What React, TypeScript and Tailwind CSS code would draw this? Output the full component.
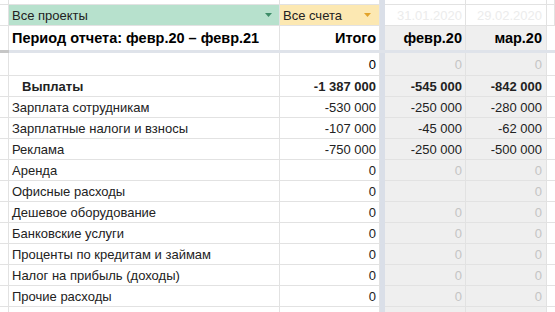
import React from "react";

const G = "border-[#e2e2e2]";

type Row = { label: string; bold?: boolean; indent?: boolean; total: string; e: string; f: string; eDark?: boolean };

const rows: Row[] = [
  { label: "Выплаты", bold: true, indent: true, total: "-1 387 000", e: "-545 000", f: "-842 000", eDark: true },
  { label: "Зарплата сотрудникам", total: "-530 000", e: "-250 000", f: "-280 000", eDark: true },
  { label: "Зарплатные налоги и взносы", total: "-107 000", e: "-45 000", f: "-62 000", eDark: true },
  { label: "Реклама", total: "-750 000", e: "-250 000", f: "-500 000", eDark: true },
  { label: "Аренда", total: "0", e: "0", f: "0" },
  { label: "Офисные расходы", total: "0", e: "", f: "0" },
  { label: "Дешевое оборудование", total: "0", e: "0", f: "0" },
  { label: "Банковские услуги", total: "0", e: "0", f: "0" },
  { label: "Проценты по кредитам и займам", total: "0", e: "0", f: "0" },
  { label: "Налог на прибыль (доходы)", total: "0", e: "0", f: "0" },
  { label: "Прочие расходы", total: "0", e: "0", f: "0" },
];

function Tri({ color }: { color: string }) {
  return (
    <svg width="7" height="4" viewBox="0 0 7 4" className="shrink-0">
      <polygon points="0,0 7,0 3.5,4" fill={color} />
    </svg>
  );
}

export default function App() {
  const cell = `border-r border-b ${G} flex items-center`;
  const num = `${cell} justify-end pr-[3px] bg-[#efefef]`;
  const sep = "bg-[#dadfe8]";
  return (
    <div
      className="w-[555px] h-[312px] overflow-hidden bg-white text-[13px] text-black"
      style={{ fontFamily: '"Liberation Sans", Arial, sans-serif' }}
    >
      <div className="grid grid-cols-[9px_271px_100px_5px_81px_81px_1fr] grid-rows-[5px_21px_24px_3px_23px_repeat(12,21px)] leading-none">
        {/* row 0 */}
        <div className={cell} />
        <div className={cell} />
        <div className={cell} />
        <div className={sep} />
        <div className={cell} />
        <div className={cell} />
        <div className={cell} />
        {/* row 1 filters */}
        <div className={cell} />
        <div className={`${cell} bg-[#b7e1cd] justify-between pl-[3px] pr-[7px] text-[#222]`}>
          <span>Все проекты</span>
          <Tri color="#3d8c68" />
        </div>
        <div className={`${cell} bg-[#fce8b2] justify-between pl-[3px] pr-[8px] text-[#222]`}>
          <span>Все счета</span>
          <Tri color="#e2a32b" />
        </div>
        <div className={sep} />
        <div className={`${cell} justify-end pr-[3px] text-[#ececec]`}>31.01.2020</div>
        <div className={`${cell} justify-end pr-[4px] text-[#ececec]`}>29.02.2020</div>
        <div className={cell} />
        {/* row 2 header */}
        <div className={`border-r ${G}`} />
        <div className={`border-r ${G} flex items-center pl-[3px] font-bold text-[14.5px]`}>Период отчета: февр.20 – февр.21</div>
        <div className={`border-r ${G} flex items-center justify-end pr-[3px] font-bold text-[14.5px]`}>Итого</div>
        <div className={sep} />
        <div className={`border-r ${G} flex items-center justify-end pr-[3px] font-bold text-[14.5px] bg-[#efefef]`}>февр.20</div>
        <div className={`border-r ${G} flex items-center justify-end pr-[4px] font-bold text-[14.5px] bg-[#efefef]`}>мар.20</div>
        <div />
        {/* frozen separator */}
        <div className="bg-[#c6c6c6]" />
        <div className="col-span-6 bg-[#dfe3ea]" />
        {/* row 3 */}
        <div className={cell} />
        <div className={cell} />
        <div className={`${cell} justify-end pr-[3px]`}>0</div>
        <div className={sep} />
        <div className={`${num} text-[#c4c4c4]`}>0</div>
        <div className={`${num} text-[#c4c4c4] pr-[4px]`}>0</div>
        <div className={`border-b ${G}`} />
        {rows.map((r, i) => (
          <React.Fragment key={i}>
            <div className={cell} />
            <div className={`${cell} ${r.indent ? "pl-[13px]" : "pl-[3px]"} ${r.bold ? "font-bold" : ""} text-[#222]`}>{r.label}</div>
            <div className={`${cell} justify-end pr-[3px] ${r.bold ? "font-bold" : ""} text-[#222]`}>{r.total}</div>
            <div className={sep} />
            <div className={`${num} ${r.bold ? "font-bold" : ""} ${r.eDark ? "text-[#222]" : "text-[#c4c4c4]"}`}>{r.e}</div>
            <div className={`${num} pr-[4px] ${r.bold ? "font-bold" : ""} ${r.eDark ? "text-[#222]" : "text-[#c4c4c4]"}`}>{r.f}</div>
            <div className={`border-b ${G}`} />
          </React.Fragment>
        ))}
        <div className={cell} />
        <div className={cell} />
        <div className={cell} />
        <div className={sep} />
        <div className={`${num}`} />
        <div className={`${num}`} />
        <div />
      </div>
    </div>
  );
}
